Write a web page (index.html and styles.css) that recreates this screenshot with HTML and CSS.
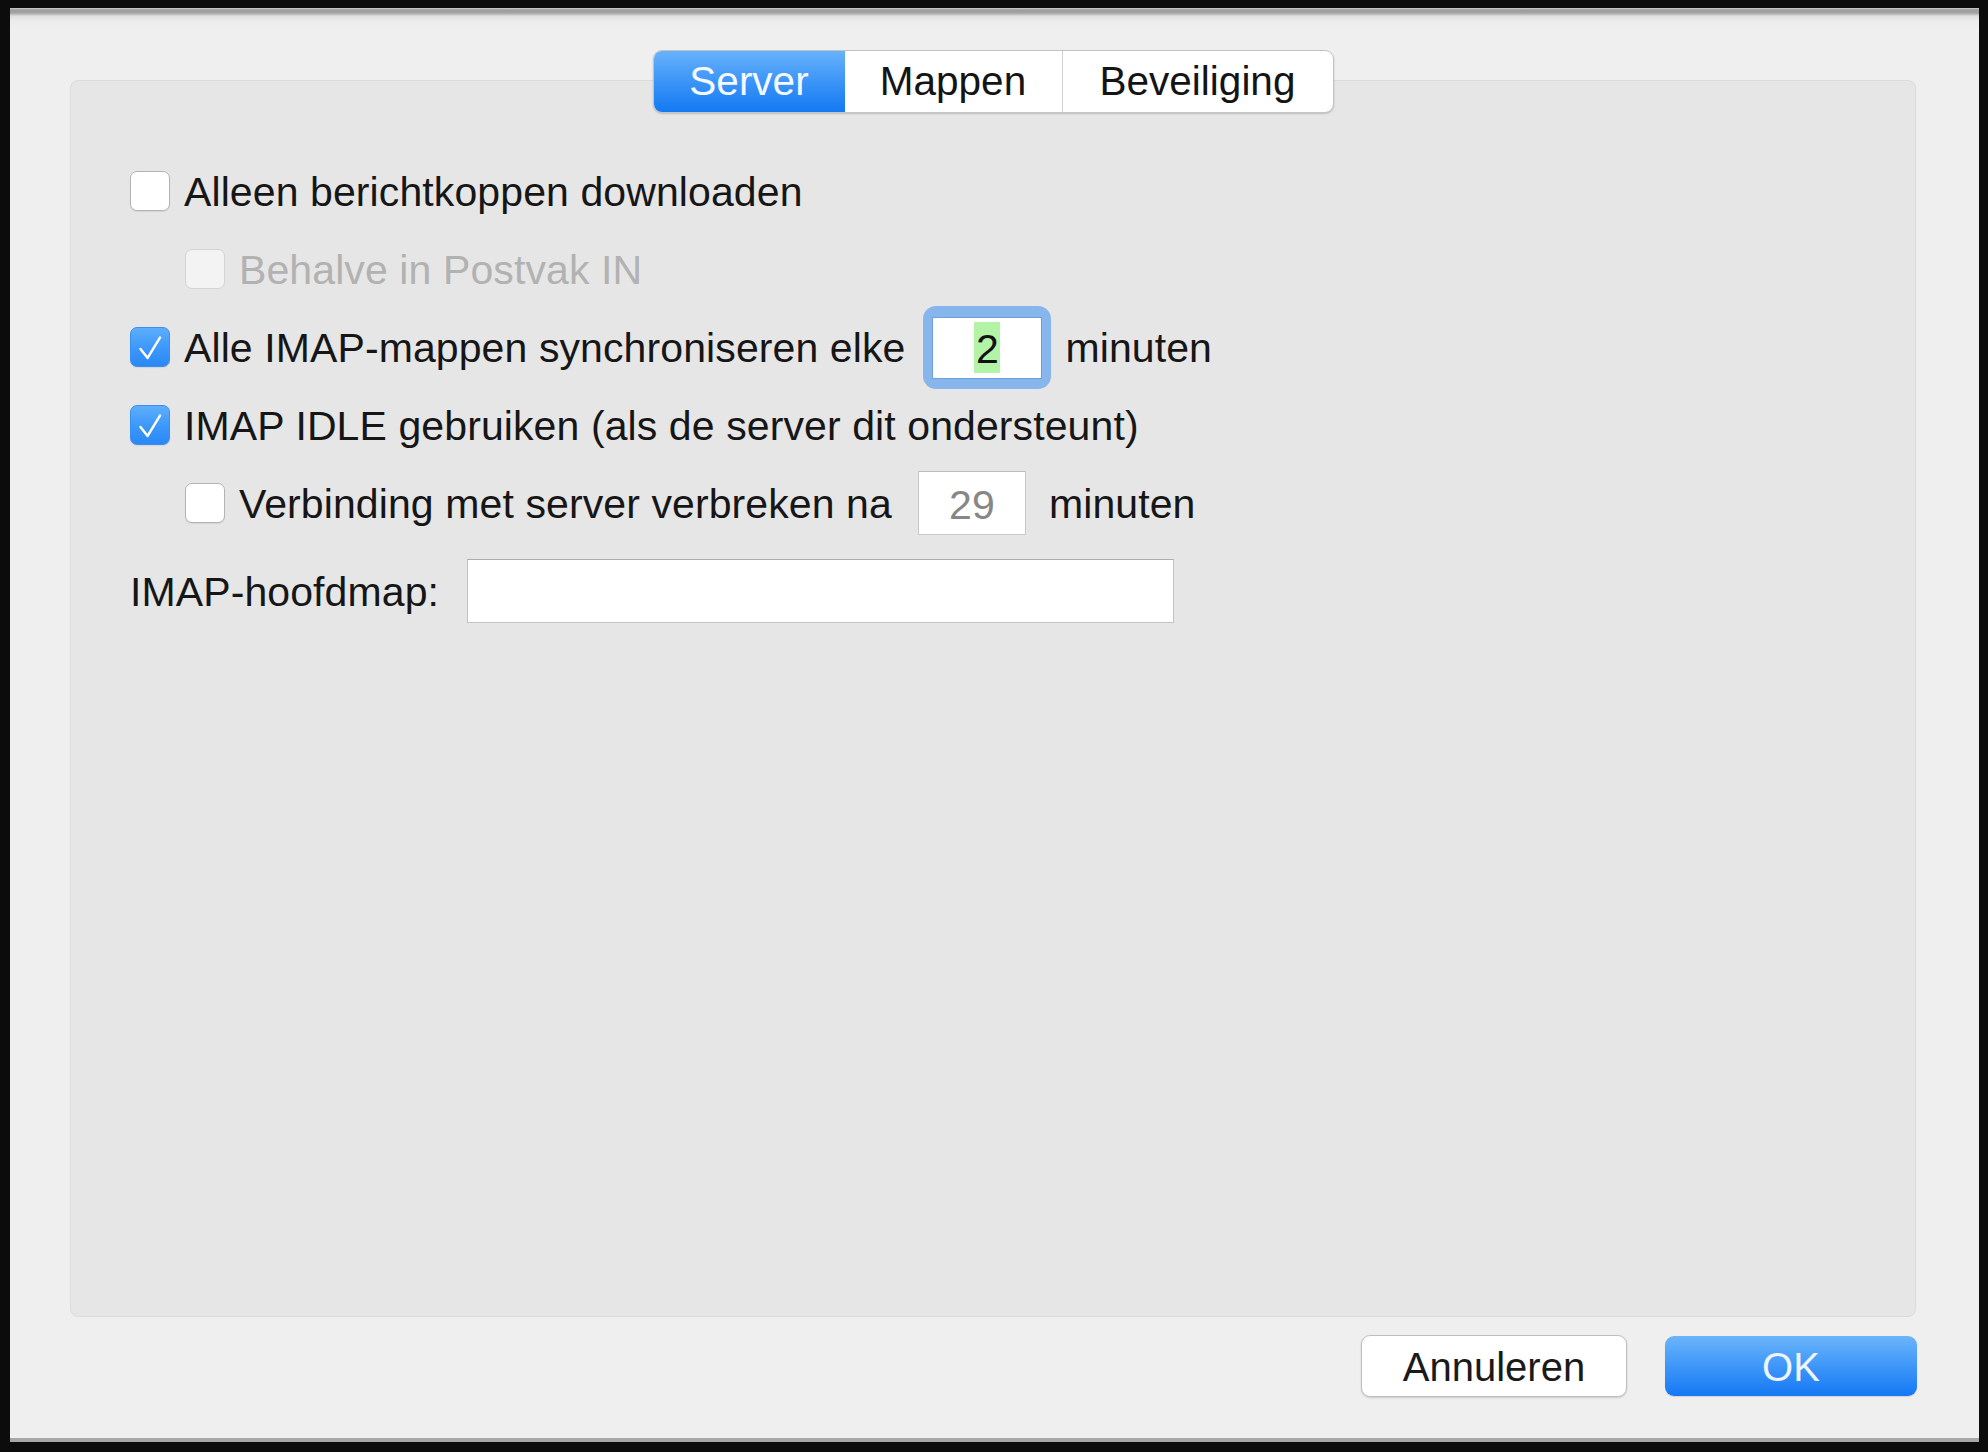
FILE: index.html
```html
<!DOCTYPE html>
<html lang="nl">
<head>
<meta charset="utf-8">
<title>Accountinstellingen</title>
<link rel="stylesheet" href="styles.css">
</head>
<body>
<div class="window">
  <div class="tabbar">
    <div class="seg">
      <span class="tab tab-server active">Server</span><span class="tab tab-mappen">Mappen</span><span class="tab tab-beveiliging">Beveiliging</span>
    </div>
  </div>
  <div class="panel">
    <div class="row">
      <span class="cb"></span><span class="lbl">Alleen berichtkoppen downloaden</span>
    </div>
    <div class="row indent disabled">
      <span class="cb"></span><span class="lbl">Behalve in Postvak IN</span>
    </div>
    <div class="row">
      <span class="cb checked"><svg viewBox="0 0 40 40" width="40" height="40"><path d="M10 21 L17.5 30.5 L30.5 9" fill="none" stroke="#fff" stroke-width="2.6" stroke-linecap="round" stroke-linejoin="round"/></svg></span>
      <span class="lbl">Alle IMAP-mappen synchroniseren elke</span>
      <span class="focusring"><span class="numbox"><span class="sel">2</span></span></span>
      <span class="lbl unit">minuten</span>
    </div>
    <div class="row">
      <span class="cb checked"><svg viewBox="0 0 40 40" width="40" height="40"><path d="M10 21 L17.5 30.5 L30.5 9" fill="none" stroke="#fff" stroke-width="2.6" stroke-linecap="round" stroke-linejoin="round"/></svg></span>
      <span class="lbl">IMAP IDLE gebruiken (als de server dit ondersteunt)</span>
    </div>
    <div class="row indent">
      <span class="cb"></span><span class="lbl">Verbinding met server verbreken na</span>
      <span class="numbox2">29</span>
      <span class="lbl unit2">minuten</span>
    </div>
    <div class="row rootrow">
      <span class="lbl">IMAP-hoofdmap:</span>
      <span class="textfield"></span>
    </div>
  </div>
  <div class="buttons">
    <span class="btn btn-cancel">Annuleren</span>
    <span class="btn btn-ok">OK</span>
  </div>
</div>
</body>
</html>
```
FILE: styles.css
```css
html, body {
  margin: 0;
  padding: 0;
  background: #0c0c0c;
}
body {
  width: 1988px;
  height: 1452px;
  overflow: hidden;
  font-family: "Liberation Sans", Arial, sans-serif;
  font-size: 40px;
  color: #161616;
}
.window {
  box-sizing: border-box;
  margin-left: 10px;
  margin-top: 8px;
  width: 1969px;
  height: 1434px;
  padding-top: 42px;
  background: linear-gradient(to bottom, #cfcfcf 0, #9c9c9c 2px, #a3a3a3 5px, #dedede 8px, #ececec 13px, #efefef 20px, #efefef 100%);
  border-bottom: 4px solid #a8a8a8;
}
.tabbar {
  margin: 0 63px 0 60px;
  display: flex;
  justify-content: center;
  position: relative;
  z-index: 2;
}
.seg {
  display: flex;
  height: 63px;
  box-sizing: border-box;
  border: 1px solid #c3c3c3;
  border-radius: 9px;
  background: #fff;
  box-shadow: 0 1px 2px rgba(0,0,0,0.18);
  overflow: hidden;
  font-size: 40.5px;
}
.tab {
  display: block;
  text-align: center;
  line-height: 61px;
  color: #141414;
  box-sizing: border-box;
}
.tab-server { width: 191px; }
.tab-mappen { width: 218px; border-right: 1px solid #d2d2d2; }
.tab-beveiliging { width: 270px; }
.tab.active {
  color: #f4f8ff;
  background: linear-gradient(to bottom, #68b2fb 0%, #3c95f7 50%, #1479f3 100%);
}
.panel {
  box-sizing: border-box;
  margin: -33px 63px 0 60px;
  height: 1237px;
  background: #e6e6e6;
  border: 1px solid #dbdbdb;
  border-radius: 8px;
  padding: 71px 0 0 59px;
  position: relative;
  z-index: 1;
  font-size: 41px;
  letter-spacing: 0.1px;
}
.row {
  display: flex;
  align-items: center;
  height: 78px;
  white-space: nowrap;
}
.lbl { padding-top: 3px; }
.row.indent { padding-left: 55px; }
.cb {
  box-sizing: border-box;
  width: 40px;
  height: 40px;
  border: 1px solid #b4b4b4;
  border-radius: 7px;
  background: #fff;
  box-shadow: 0 1px 1px rgba(0,0,0,0.08);
  margin-right: 14px;
  flex: none;
  display: flex;
}
.cb svg { display: block; }
.cb.checked {
  border: 1px solid #3a8ff0;
  background: linear-gradient(to bottom, #5eaefc 0%, #3b97fa 55%, #2a88f5 100%);
}
.disabled .cb {
  border-color: #d3d3d3;
  background: #f3f3f3;
  box-shadow: none;
}
.disabled .lbl { color: #b2b2b2; }
.focusring {
  margin-left: 18px;
  width: 128px;
  height: 83px;
  box-sizing: border-box;
  border-radius: 13px;
  background: #86b6ec;
  padding: 11px 9px 10px 9px;
  flex: none;
}
.numbox {
  display: flex;
  justify-content: center;
  align-items: center;
  box-sizing: border-box;
  width: 110px;
  height: 62px;
  background: #fff;
  border: 1px solid #6d9fd8;
}
.sel {
  background: #b3f3a6;
  width: 26px;
  height: 51px;
  line-height: 55px;
  text-align: center;
  color: #111;
  letter-spacing: 0;
}
.unit { margin-left: 14px; }
.numbox2 {
  margin-left: 26px;
  box-sizing: border-box;
  width: 108px;
  height: 64px;
  background: #fff;
  border: 1px solid #c8c8c8;
  border-top-color: #bdbdbd;
  text-align: center;
  line-height: 66px;
  color: #878787;
  flex: none;
}
.unit2 { margin-left: 23px; }
.rootrow { margin-top: 10px; }
.textfield {
  margin-left: 28px;
  box-sizing: border-box;
  width: 707px;
  height: 64px;
  background: #fff;
  border: 1px solid #c2c2c2;
  border-top-color: #adadad;
  flex: none;
}
.buttons {
  display: flex;
  justify-content: flex-end;
  align-items: center;
  gap: 38px;
  margin: 18px 62px 0 0;
}
.btn {
  display: block;
  box-sizing: border-box;
  text-align: center;
}
.btn-cancel {
  width: 266px;
  height: 62px;
  line-height: 62px;
  background: #fff;
  border: 1px solid #bebebe;
  border-radius: 9px;
  box-shadow: 0 1px 2px rgba(0,0,0,0.15);
  color: #1a1a1a;
}
.btn-ok {
  width: 252px;
  height: 60px;
  line-height: 62px;
  border-radius: 9px;
  background: linear-gradient(to bottom, #6cb4fb 0%, #3e97f8 50%, #1577f4 100%);
  color: #eef5ff;
  box-shadow: 0 1px 1px rgba(0,0,0,0.12);
}
```
